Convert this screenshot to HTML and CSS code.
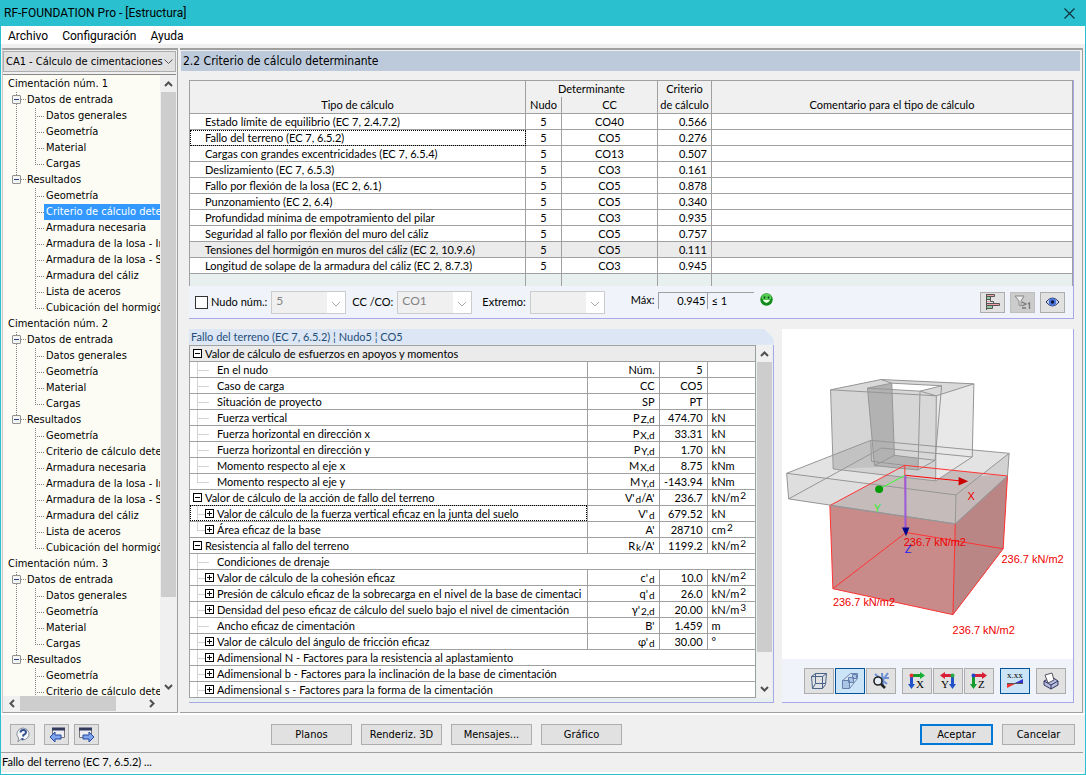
FILE: index.html
```html
<!DOCTYPE html>
<html lang="es">
<head>
<meta charset="utf-8">
<title>RF-FOUNDATION Pro - [Estructura]</title>
<link rel="stylesheet" href="styles.css">
</head>
<body>
<div class="window">
  <header class="titlebar">
    <h1>RF-FOUNDATION Pro - [Estructura]</h1>
    <button class="close" type="button" aria-label="Cerrar"><svg width="11" height="11" viewBox="0 0 11 11"><path d="M.5.5l10 10M10.5.5l-10 10" stroke="#10303a" stroke-width="1.2" fill="none"/></svg></button>
  </header>
  <nav class="menu">
    <a href="#archivo">Archivo</a><a href="#configuracion">Configuración</a><a href="#ayuda">Ayuda</a>
  </nav>

  <div class="workspace">
    <aside class="sidebar">
      <select class="case-select" aria-label="Caso de cálculo"><option>CA1 - Cálculo de cimentaciones</option></select>
      <div class="tree-frame">
        <div class="tree-view">
          <ul class="tree">
            <li><a href="#c1">Cimentación núm. 1</a>
              <ul class="groups">
                <li><button class="fold" type="button" aria-label="Contraer"></button><a href="#c1e">Datos de entrada</a>
                  <ul class="leaves"><li><a href="#a1">Datos generales</a></li><li><a href="#a2">Geometría</a></li><li><a href="#a3">Material</a></li><li><a href="#a4">Cargas</a></li></ul>
                </li>
                <li><button class="fold" type="button" aria-label="Contraer"></button><a href="#c1r">Resultados</a>
                  <ul class="leaves"><li><a href="#b1">Geometría</a></li><li><a class="current" href="#b2">Criterio de cálculo determinante</a></li><li><a href="#b3">Armadura necesaria</a></li><li><a href="#b4">Armadura de la losa - Inferior</a></li><li><a href="#b5">Armadura de la losa - Superior</a></li><li><a href="#b6">Armadura del cáliz</a></li><li><a href="#b7">Lista de aceros</a></li><li><a href="#b8">Cubicación del hormigón</a></li></ul>
                </li>
              </ul>
            </li>
            <li><a href="#c2">Cimentación núm. 2</a>
              <ul class="groups">
                <li><button class="fold" type="button" aria-label="Contraer"></button><a href="#c2e">Datos de entrada</a>
                  <ul class="leaves"><li><a href="#d1">Datos generales</a></li><li><a href="#d2">Geometría</a></li><li><a href="#d3">Material</a></li><li><a href="#d4">Cargas</a></li></ul>
                </li>
                <li><button class="fold" type="button" aria-label="Contraer"></button><a href="#c2r">Resultados</a>
                  <ul class="leaves"><li><a href="#e1">Geometría</a></li><li><a href="#e2">Criterio de cálculo determinante</a></li><li><a href="#e3">Armadura necesaria</a></li><li><a href="#e4">Armadura de la losa - Inferior</a></li><li><a href="#e5">Armadura de la losa - Superior</a></li><li><a href="#e6">Armadura del cáliz</a></li><li><a href="#e7">Lista de aceros</a></li><li><a href="#e8">Cubicación del hormigón</a></li></ul>
                </li>
              </ul>
            </li>
            <li><a href="#c3">Cimentación núm. 3</a>
              <ul class="groups">
                <li><button class="fold" type="button" aria-label="Contraer"></button><a href="#c3e">Datos de entrada</a>
                  <ul class="leaves"><li><a href="#f1">Datos generales</a></li><li><a href="#f2">Geometría</a></li><li><a href="#f3">Material</a></li><li><a href="#f4">Cargas</a></li></ul>
                </li>
                <li><button class="fold" type="button" aria-label="Contraer"></button><a href="#c3r">Resultados</a>
                  <ul class="leaves"><li><a href="#g1">Geometría</a></li><li><a href="#g2">Criterio de cálculo determinante</a></li><li><a href="#g3">Armadura necesaria</a></li></ul>
                </li>
              </ul>
            </li>
          </ul>
        </div>
        <div class="vscroll tree-v">
          <svg class="arrow" viewBox="0 0 15 17"><path d="M4 11l3.500-3.500L11 11" class="chev"/></svg>
          <div class="track"><div class="thumb" style="height:86%"></div></div>
          <svg class="arrow" viewBox="0 0 15 17"><path d="M4 6l3.500 3.500L11 6" class="chev"/></svg>
        </div>
        <div class="hscroll">
          <svg class="arrow" viewBox="0 0 17 15"><path d="M11 4L7.500 7.500 11 11" class="chev"/></svg>
          <div class="track"><div class="thumb" style="width:78%"></div></div>
          <svg class="arrow" viewBox="0 0 17 15"><path d="M7 4l3.500 3.500L7 11" class="chev"/></svg>
        </div>
      </div>
    </aside>

    <main class="content">
      <h2 class="section-title">2.2 Criterio de cálculo determinante</h2>
      <section class="panel">
        <table class="grid checks">
          <colgroup><col class="c-type"><col class="c-node"><col class="c-cc"><col class="c-crit"><col></colgroup>
          <thead>
            <tr><th rowspan="2" class="low">Tipo de cálculo</th><th colspan="2">Determinante</th><th class="nob">Criterio</th><th rowspan="2" class="low">Comentario para el tipo de cálculo</th></tr>
            <tr><th>Nudo</th><th>CC</th><th class="nob">de cálculo</th></tr>
          </thead>
          <tbody>
            <tr><td>Estado límite de equilibrio (EC 7, 2.4.7.2)</td><td>5</td><td>CO40</td><td>0.566</td><td></td></tr>
            <tr class="focus"><td>Fallo del terreno (EC 7, 6.5.2)</td><td>5</td><td>CO5</td><td>0.276</td><td></td></tr>
            <tr><td>Cargas con grandes excentricidades (EC 7, 6.5.4)</td><td>5</td><td>CO13</td><td>0.507</td><td></td></tr>
            <tr><td>Deslizamiento (EC 7, 6.5.3)</td><td>5</td><td>CO3</td><td>0.161</td><td></td></tr>
            <tr><td>Fallo por flexión de la losa (EC 2, 6.1)</td><td>5</td><td>CO5</td><td>0.878</td><td></td></tr>
            <tr><td>Punzonamiento (EC 2, 6.4)</td><td>5</td><td>CO5</td><td>0.340</td><td></td></tr>
            <tr><td>Profundidad mínima de empotramiento del pilar</td><td>5</td><td>CO3</td><td>0.935</td><td></td></tr>
            <tr><td>Seguridad al fallo por flexión del muro del cáliz</td><td>5</td><td>CO5</td><td>0.757</td><td></td></tr>
            <tr class="shaded"><td>Tensiones del hormigón en muros del cáliz (EC 2, 10.9.6)</td><td>5</td><td>CO5</td><td>0.111</td><td></td></tr>
            <tr><td>Longitud de solape de la armadura del cáliz (EC 2, 8.7.3)</td><td>5</td><td>CO3</td><td>0.945</td><td></td></tr>
            <tr class="rest"><td></td><td></td><td></td><td></td><td></td></tr>
          </tbody>
        </table>
        <div class="filter">
          <label class="check"><input type="checkbox">Nudo núm.:</label>
          <select class="combo" disabled aria-label="Nudo núm."><option>5</option></select>
          <label for="cc">CC /CO:</label>
          <select class="combo" id="cc" disabled><option>CO1</option></select>
          <label class="extreme" for="ext">Extremo:</label>
          <select class="combo" id="ext" disabled><option></option></select>
          <span class="max">Máx:</span>
          <div class="result"><output>0.945</output><span>≤ 1</span></div>
          <svg class="smile" width="13" height="13" viewBox="0 0 13 13"><circle cx="6.500" cy="6.500" r="6.200" fill="#128a1c"/><ellipse cx="6.500" cy="4.200" rx="5" ry="3.600" fill="#58cc52"/><path d="M4.500 3.500v2M8.500 3.500v2" stroke="#042" stroke-width="1.500"/><path d="M2.800 7q3.700 5.800 7.400 0z" fill="#eaffea"/></svg>
          <div class="filter-tools">
            <button class="tool" type="button" aria-label="Diagrama"><svg width="16" height="16" viewBox="0 0 16 16"><path d="M1.500 0v16" stroke="#555"/><path d="M1.500.5h8v2h-8M1.500 5.500h4v-3M1.500 9.500h13v2h-13M5.500 5.500v2h3v2M1.500 14.500h6v-3" fill="none" stroke="#555"/><path d="M2 1.500h7M2 10.500h12M2 7.500h3" stroke="#f2a0a8"/><path d="M2 4h3M2 13h5" stroke="#72c288" stroke-width="1.500"/></svg></button>
            <button class="tool off" type="button" aria-label="Filtro mayor que 1"><svg width="18" height="16" viewBox="0 0 18 16"><path d="M1 2h9L7 7v5L5 11V7z" fill="#eee" stroke="#888"/><path d="M8 8l4 2-4 2M8 14h4M14 10l1.500-1v6" fill="none" stroke="#777" stroke-width="1.300"/></svg></button>
            <button class="tool" type="button" aria-label="Ver"><svg width="15" height="12" viewBox="0 0 15 12"><path d="M1 6q6.500-8 13 0q-6.500 8-13 0z" fill="#dfe9ff" stroke="#222b55"/><circle cx="7.500" cy="6" r="3.800" fill="#4a74dc"/><circle cx="7.500" cy="6" r="1.700" fill="#10153a"/></svg></button>
          </div>
        </div>
      </section>

      <div class="lower">
        <section class="panel detail">
          <h3>Fallo del terreno (EC 7, 6.5.2) ¦ Nudo5 ¦ CO5</h3>
          <div class="detail-body">
            <table class="grid values">
              <colgroup><col><col class="v-sym"><col class="v-num"><col class="v-unit"></colgroup>
              <tbody>
                <tr class="shaded"><th colspan="4"><button class="box" type="button" aria-label="Contraer"></button>Valor de cálculo de esfuerzos en apoyos y momentos</th></tr>
                <tr><td class="br">En el nudo</td><td>Núm.</td><td>5</td><td></td></tr>
                <tr><td class="br">Caso de carga</td><td>CC</td><td>CO5</td><td></td></tr>
                <tr><td class="br">Situación de proyecto</td><td>SP</td><td>PT</td><td></td></tr>
                <tr><td class="br">Fuerza vertical</td><td>P<sub>Z,d</sub></td><td>474.70</td><td>kN</td></tr>
                <tr><td class="br">Fuerza horizontal en dirección x</td><td>P<sub>X,d</sub></td><td>33.31</td><td>kN</td></tr>
                <tr><td class="br">Fuerza horizontal en dirección y</td><td>P<sub>Y,d</sub></td><td>1.70</td><td>kN</td></tr>
                <tr><td class="br">Momento respecto al eje x</td><td>M<sub>X,d</sub></td><td>8.75</td><td>kNm</td></tr>
                <tr><td class="br last">Momento respecto al eje y</td><td>M<sub>Y,d</sub></td><td>-143.94</td><td>kNm</td></tr>
                <tr><th><button class="box" type="button" aria-label="Contraer"></button>Valor de cálculo de la acción de fallo del terreno</th><td>V'<sub>d</sub>/A'</td><td>236.7</td><td>kN/m<sup>2</sup></td></tr>
                <tr class="focus"><td class="br sub"><button class="box plus" type="button" aria-label="Expandir"></button>Valor de cálculo de la fuerza vertical eficaz en la junta del suelo</td><td>V'<sub>d</sub></td><td>679.52</td><td>kN</td></tr>
                <tr><td class="br sub last"><button class="box plus" type="button" aria-label="Expandir"></button>Área eficaz de la base</td><td>A'</td><td>28710</td><td>cm<sup>2</sup></td></tr>
                <tr><th><button class="box" type="button" aria-label="Contraer"></button>Resistencia al fallo del terreno</th><td>R<sub>k</sub>/A'</td><td>1199.2</td><td>kN/m<sup>2</sup></td></tr>
                <tr><td class="br" colspan="4">Condiciones de drenaje</td></tr>
                <tr><td class="br sub"><button class="box plus" type="button" aria-label="Expandir"></button>Valor de cálculo de la cohesión eficaz</td><td>c'<sub>d</sub></td><td>10.0</td><td>kN/m<sup>2</sup></td></tr>
                <tr><td class="br sub"><button class="box plus" type="button" aria-label="Expandir"></button>Presión de cálculo eficaz de la sobrecarga en el nivel de la base de cimentaci</td><td>q'<sub>d</sub></td><td>26.0</td><td>kN/m<sup>2</sup></td></tr>
                <tr><td class="br sub"><button class="box plus" type="button" aria-label="Expandir"></button>Densidad del peso eficaz de cálculo del suelo bajo el nivel de cimentación</td><td>γ'<sub>2,d</sub></td><td>20.00</td><td>kN/m<sup>3</sup></td></tr>
                <tr><td class="br">Ancho eficaz de cimentación</td><td>B'</td><td>1.459</td><td>m</td></tr>
                <tr><td class="br sub"><button class="box plus" type="button" aria-label="Expandir"></button>Valor de cálculo del ángulo de fricción eficaz</td><td>φ'<sub>d</sub></td><td>30.00</td><td>°</td></tr>
                <tr><td class="br sub" colspan="4"><button class="box plus" type="button" aria-label="Expandir"></button>Adimensional N - Factores para la resistencia al aplastamiento</td></tr>
                <tr><td class="br sub" colspan="4"><button class="box plus" type="button" aria-label="Expandir"></button>Adimensional b - Factores para la inclinación de la base de cimentación</td></tr>
                <tr><td class="br sub" colspan="4"><button class="box plus" type="button" aria-label="Expandir"></button>Adimensional s - Factores para la forma de la cimentación</td></tr>
              </tbody>
            </table>
            <div class="vscroll">
              <svg class="arrow" viewBox="0 0 15 17"><path d="M4 11l3.500-3.500L11 11" class="chev"/></svg>
              <div class="track"><div class="thumb" style="height:91%"></div></div>
              <svg class="arrow" viewBox="0 0 15 17"><path d="M4 6l3.500 3.500L11 6" class="chev"/></svg>
            </div>
          </div>
        </section>

        <section class="panel viewer">
          <svg class="scene" viewBox="781 329 292 330" role="img" aria-label="Cimentación">
            <g transform="translate(780 360) scale(.33333)" stroke-width="3" stroke-linejoin="round" fill="none">
              <path d="M147 436L372 315 681 347 668 566 517 764 156 686z" fill="#c98a8a"/>
              <path d="M524 491L681 347 668 566 517 764z" fill="#b98585"/>
              <path d="M17 339L270 240 686 279 681 347 524 491 23 416z" fill="#e3e3e3"/>
              <path d="M17 339L526 404 524 491 23 416z" fill="#dedede"/>
              <path d="M147 436L372 315 681 347 524 491z" fill="#c6bbbb"/>
              <path d="M526 404L686 279 681 347 524 491z" fill="#c4b8b8"/>
              <path d="M597 349L686 279 681 347 640 343z" fill="#d2d2d2"/>
              <path d="M149 88L301 57 580 70 575 290 465 362 157 326z" fill="#d2d2d2" fill-opacity=".93"/>
              <path d="M467 106L580 70 575 290 465 362z" fill="#e8e8e8"/>
              <path d="M149 88L301 57 580 70 467 106z" fill="#d9d9d9"/>
              <path d="M333 68L483 76 418 92 335 88z" fill="#fff"/>
              <path d="M260 83L333 68 341 285 281 316z" fill="#b2b2b2"/>
              <path d="M341 95L415 98 412 300 341 285z" fill="#d6d6d6"/>
              <path d="M157 285L270 240 277 270 281 316 302 320 157 326z" fill="#c2c2c2"/>
              <path d="M281 316L341 285 463 300 412 329z" fill="#b4b4b4"/>
              <path d="M418 92L467 106 463 300 412 329z" fill="#d8d8d8"/>
              <g stroke="#969696">
                <path d="M149 88L301 57 580 70 467 106zM157 326L465 362 575 290M149 88L157 326M467 106L465 362M580 70L575 290"/>
                <path d="M260 83L333 68 483 76 418 92zM281 316L341 285 463 300 412 329zM260 83L281 316M333 68L341 285M483 76L463 300M418 92L412 329M301 57L333 68M418 92L467 106"/>
                <path d="M17 339L270 240 686 279 526 404zM17 339L23 416 524 491 681 347 686 279M526 404L524 491M270 240L272 303M23 416L302 263 575 290M272 303L372 315"/>
              </g>
              <g stroke="#f33">
                <path d="M147 436L156 686 517 764 668 566 681 347 372 315 147 436M524 491L517 764M156 686L376 517 668 566M372 315L376 517"/>
              </g>
              <path d="M147 436L524 491 681 347" stroke="#969696"/>
              <path d="M373 345L540 362" stroke="#f00"/><path d="M534 350L563 363 534 376z" fill="#c00"/>
              <path d="M373 345L300 384" stroke="#3f3"/><ellipse cx="295" cy="387" rx="12" ry="11" fill="#090"/>
              <path d="M374 345V505" stroke="#9a5cdc" stroke-width="6"/><path d="M364 502H386L376 528z" fill="#008"/>
            </g>
            <g class="labels">
              <text x="967" y="500">X</text><text x="873" y="512" class="y">Y</text><text x="904" y="553" class="z">Z</text>
              <text x="903" y="546">236.7 kN/m2</text><text x="1001" y="563">236.7 kN/m2</text><text x="832" y="606">236.7 kN/m2</text><text x="952" y="634">236.7 kN/m2</text>
            </g>
          </svg>
          <div class="view-tools">
            <div class="set">
              <button class="tool wide" type="button" aria-label="Alambre"><svg width="18" height="18" viewBox="0 0 18 18"><path d="M1.500 4.500h11v12h-10zM1.500 4.500l4-3h11l-4 3M16.500 1.500l-1 11-3 4M5.500 1.500v10h10M5.500 11.500l-3 5" fill="#dde4ee" fill-opacity=".5" stroke="#4c6388"/></svg></button>
              <button class="tool wide on" type="button" aria-label="Perspectiva"><svg width="18" height="18" viewBox="0 0 18 18"><path d="M1.500 8.500l8-7h7v5l-8 10" fill="#d3e3f4" stroke="#6d88b0"/><path d="M11.500 2.500h4v4h-4zM7.500 5.500h5v5h-5zM1.500 8.500h7v8h-7z" fill="#a9c4e4" stroke="#6580aa"/></svg></button>
              <button class="tool wide" type="button" aria-label="Zoom total"><svg width="18" height="18" viewBox="0 0 18 18"><path d="M3 2l12 10M16 1L8 12M10 1l1 12M17 6H5" stroke="#6c8fd4" stroke-width="2"/><circle cx="6" cy="9" r="4" fill="#e8eef8" stroke="#222" stroke-width="1.600"/><path d="M9 12l4 4" stroke="#222" stroke-width="2.500"/></svg></button>
            </div>
            <div class="set">
              <button class="tool wide" type="button" aria-label="Vista X"><svg width="18" height="18" viewBox="0 0 18 18"><path d="M3 3.500h10" stroke="#149c2c" stroke-width="3"/><path d="M12 0l5 3.500-5 3.500z" fill="#19b035"/><path d="M3.500 4v9" stroke="#2352c8" stroke-width="3"/><path d="M0 12h7l-3.500 5z" fill="#2352c8"/><circle cx="3.500" cy="3.500" r="2" fill="#e33"/><text x="8" y="16" class="ax">X</text></svg></button>
              <button class="tool wide" type="button" aria-label="Vista Y"><svg width="18" height="18" viewBox="0 0 18 18"><path d="M4 3.500h10" stroke="#d81f36" stroke-width="3"/><path d="M6 0L1 3.500 6 7z" fill="#d81f36"/><path d="M13.500 4v9" stroke="#2352c8" stroke-width="3"/><path d="M10 12h7l-3.500 5z" fill="#2352c8"/><circle cx="13.500" cy="3.500" r="2" fill="#2a4"/><text x="2" y="16" class="ax">Y</text></svg></button>
              <button class="tool wide" type="button" aria-label="Vista Z"><svg width="18" height="18" viewBox="0 0 18 18"><path d="M3 3.500h10" stroke="#d81f36" stroke-width="3"/><path d="M12 0l5 3.500-5 3.500z" fill="#d81f36"/><path d="M3.500 4v9" stroke="#149c2c" stroke-width="3"/><path d="M0 12h7l-3.500 5z" fill="#149c2c"/><circle cx="3.500" cy="3.500" r="2" fill="#24c"/><text x="8" y="16" class="ax">Z</text></svg></button>
            </div>
            <button class="tool wide on" type="button" aria-label="Valores"><svg width="18" height="18" viewBox="0 0 18 18"><text x="1" y="6" class="xx">x.xx</text><path d="M1 11.500h16" stroke="#555"/><path d="M1 12v4l8-4z" fill="#e33"/><path d="M17 11V7l-8 4z" fill="#33c"/></svg></button>
            <button class="tool wide" type="button" aria-label="Imprimir"><svg width="18" height="18" viewBox="0 0 18 18"><path d="M2 9l8-4 6 4v4l-7 4-7-4z" fill="#b8bce0" stroke="#33365c"/><path d="M3 3l7-2 2 7-6 3z" fill="#fff" stroke="#556"/><path d="M2 9l7 4 7-4M9 13v4" fill="none" stroke="#33365c"/></svg></button>
          </div>
        </section>
      </div>
    </main>
  </div>

  <footer class="actions">
    <div class="icons">
      <button class="tool" type="button" aria-label="Ayuda"><svg width="16" height="16" viewBox="0 0 16 16"><path d="M8 1a6.500 6 0 1 1-3 11.500L3 15l.5-4A6.500 6 0 0 1 8 1z" fill="#f5f7fb" stroke="#888e9c"/><path d="M5.500 5.500q0-2.500 2.700-2.500T11 5.300Q11 6.800 8.500 8L8 9.500M7.500 11v2" fill="none" stroke="#31508f" stroke-width="2"/></svg></button>
      <div class="pair">
        <button class="tool" type="button" aria-label="Anterior"><svg width="16" height="16" viewBox="0 0 16 16"><path d="M3.500 1.500h12v9h-12z" fill="#ededf2" stroke="#777"/><path d="M3 2h13" stroke="#333b5e" stroke-width="3"/><path d="M1 10l5-5v3h6v4H6v3z" fill="#7fa4ee" stroke="#2848a0"/></svg></button>
        <button class="tool" type="button" aria-label="Siguiente"><svg width="16" height="16" viewBox="0 0 16 16"><path d="M.5 1.500h12v9H.5z" fill="#ededf2" stroke="#777"/><path d="M0 2h13" stroke="#333b5e" stroke-width="3"/><path d="M15 10l-5-5v3H4v4h6v3z" fill="#7fa4ee" stroke="#2848a0"/></svg></button>
      </div>
    </div>
    <div class="commands">
      <button class="btn" type="button">Planos</button><button class="btn" type="button">Renderiz. 3D</button><button class="btn" type="button">Mensajes...</button><button class="btn" type="button">Gráfico</button>
    </div>
    <div class="confirm">
      <button class="btn primary" type="button">Aceptar</button><button class="btn" type="button">Cancelar</button>
    </div>
  </footer>
  <div class="status">Fallo del terreno (EC 7, 6.5.2) ...</div>
</div>
</body>
</html>
```
FILE: styles.css
```css
:root {
  --ui: "DejaVu Sans Condensed", "DejaVu Sans", sans-serif;
  --bar: Roboto, "Liberation Sans", sans-serif;
  --grid: Lato, "Liberation Sans", Arial, sans-serif;
  --line: #a0a0a0;
  --lilac: #a8a8e8;
  --soft: #f0f4fa;
}
* { box-sizing: border-box; }
body { margin: 0; background: #f0f0f0; color: #000; font: 11px/16px var(--grid); }
h1, h2, h3, ul { margin: 0; padding: 0; font-size: 11px; font-weight: normal; }
ul { list-style: none; }
a { color: inherit; text-decoration: none; }
button, select, input { margin: 0; font: inherit; color: inherit; }
button { padding: 0; border-radius: 0; }

.window { display: flex; flex-direction: column; height: 100vh; min-height: 775px; border: 1px solid #2bc0cf; border-top: 0; }
.titlebar { display: flex; flex: none; align-items: center; justify-content: space-between; height: 26px; padding: 0 10px 0 3px; background: #2bc0cf; }
.titlebar h1 { font: 12px/24px var(--bar); }
.close { display: flex; border: 0; background: none; }
.menu { display: flex; flex: none; gap: 14px; height: 18px; padding-left: 7px; background: #fff; font: 12px/20px var(--bar); }

.workspace { display: flex; flex: 1; gap: 2px; min-height: 0; padding: 4px 2px 0 1px; border-bottom: 2px solid #fff; }
.sidebar { display: flex; flex: none; flex-direction: column; gap: 2px; width: 176px; padding: 1px 1px 1px 0; border: 1px solid var(--line); border-top-width: 2px; border-left-color: #ccc; }
.case-select { flex: none; height: 21px; padding: 0 12px 0 2px; border: 1px solid #adadad; border-radius: 0; appearance: none; font: 11px/18px var(--ui);
  background: #e1e1e1 url("data:image/svg+xml,%3Csvg xmlns='http://www.w3.org/2000/svg' width='9' height='6'%3E%3Cpath d='M.5.5l4 4 4-4' fill='none' stroke='%23555'/%3E%3C/svg%3E") right 2px center no-repeat; }
.tree-frame { display: grid; flex: 1; grid-template: minmax(0, 1fr) 15px / minmax(0, 1fr) 16px; min-height: 0; border-top: 1px solid #888; background: #f0f0f0; }
.tree-view { padding-top: 1px; overflow: hidden; background: #fdfcf4; font-family: var(--ui); white-space: nowrap; }
.tree > li > a { padding-left: 5px; }
.groups > li { padding-left: 9px;
  background: repeating-linear-gradient(#808080 0 1px, transparent 1px 2px) 13px 0 / 1px 100% no-repeat; }
.groups > li:last-child { background-size: 1px 8px; }
.groups > li > a { padding-left: 6px; background: repeating-linear-gradient(90deg, #808080 0 1px, transparent 1px 2px) 0 50% / 5px 1px no-repeat; }
.fold { width: 9px; height: 9px; border: 1px solid #919191; border-radius: 1px; vertical-align: middle; margin-top: -2px; background: linear-gradient(#27408b, #27408b) center / 5px 1px no-repeat, #f4f4f4; }
.leaves { margin-left: 23px; }
.leaves > li { padding-left: 9px;
  background: repeating-linear-gradient(#808080 0 1px, transparent 1px 2px) 0 0 / 1px 100% no-repeat, repeating-linear-gradient(90deg, #808080 0 1px, transparent 1px 2px) 0 8px / 9px 1px no-repeat; }
.leaves > li:last-child { background-size: 1px 8px, 9px 1px; }
.leaves a { display: block; padding-left: 2px; }
.current { background: #3399ff; color: #fff; }

.vscroll { display: flex; flex-direction: column; width: 15px; background: #f0f0f0; }
.tree-v { margin-left: 1px; }
.hscroll { display: flex; background: #f0f0f0; }
.track { flex: 1; }
.thumb { background: #cdcdcd; height: 100%; }
.vscroll .arrow { width: 15px; height: 17px; }
.hscroll .arrow { width: 17px; height: 15px; }
.chev { fill: none; stroke: #505050; stroke-width: 2; }

.content { display: flex; flex: 1; flex-direction: column; min-width: 0; padding: 1px 0 0; border: 1px solid var(--line); border-width: 2px 1px 1px 0; }
.section-title { flex: none; height: 20px; margin: 0 2px 9px 1px; padding-left: 2px; background: #bccadb; font: 12px/20px var(--ui); }
.panel { margin: 0 8px 0 9px; border: solid var(--lilac); border-width: 0 1px 1px 0; background: var(--soft); }

.grid { width: 100%; border-collapse: collapse; table-layout: fixed; background: #fff; }
.grid th, .grid td { height: 16px; padding: 0; border: 1px solid var(--line); overflow: hidden; font-weight: normal; line-height: 15px; white-space: nowrap; }
.checks th { background: #f0f0f0; border-bottom: 0; text-align: center; }
.checks tr + tr th { border-top: 0; }
.checks .nob { border-bottom: 0; }
.checks th.low { vertical-align: bottom; line-height: 17px; }
.checks thead th { height: 16px; }
.checks thead tr + tr th { height: 17px; }
.c-type { width: 336px; } .c-node { width: 36px; } .c-cc { width: 96px; } .c-crit { width: 54px; }
.checks td { text-align: center; }
.checks td:first-child { padding-left: 15px; text-align: left; }
.checks td:nth-child(4) { padding-right: 4px; text-align: right; }
.shaded { background: #ebebeb; }
.grid .rest td { height: 12px; border-bottom: 0; background: #e8efef; }
.focus td:first-child { outline: 1px dotted #000; outline-offset: -1px; }

.filter { display: flex; align-items: center; gap: 4px; height: 32px; padding: 1px 8px 0 6px; }
.check { display: flex; align-items: center; gap: 3px; }
.check input { width: 13px; height: 13px; border: 1px solid #333; background: #fff; appearance: none; }
.combo { width: 75px; height: 23px; margin-right: 2px; padding: 0 0 2px 4px; border: 1px solid #ccc; border-radius: 0; appearance: none; color: #838383; opacity: 1; font-size: 12px;
  background: url("data:image/svg+xml,%3Csvg xmlns='http://www.w3.org/2000/svg' width='18' height='21'%3E%3Cpath d='M0 0h18v21H0z' fill='%23fff'/%3E%3Cpath d='M5 10l4 4 4-4' fill='none' stroke='%23aaa'/%3E%3C/svg%3E") right 0 top 0 no-repeat, #f0f0f0; }
.extreme { margin-left: 4px; }
.max { margin: 0 0 4px 20px; }
.result { display: flex; width: 96px; height: 17px; margin: 0 2px 4px 0; border: solid var(--line); border-width: 1px 0 0 1px; }
.result output { width: 49px; padding-right: 2px; border-right: 1px solid var(--line); text-align: right; }
.result span { padding-left: 3px; }
.smile { margin-bottom: 6px; }
.filter-tools { display: flex; gap: 5px; margin-left: auto; }
.tool { display: flex; align-items: center; justify-content: center; width: 25px; height: 21px; border: 1px solid #adadad; background: #e1e1e1; }
.tool.off { border-color: #bfbfbf; background: #ccc; }
.tool.wide { width: 30px; height: 26px; }
.tool.on { border-color: #005499; background: #cce4f7; }

.lower { display: grid; flex: 1; grid-template-columns: minmax(0, 2fr) minmax(0, 1fr); gap: 8px; min-height: 0; margin: 10px 8px 9px 9px; }
.lower .panel { display: flex; flex-direction: column; min-height: 0; margin: 0; }
.lower .detail { border-right: 0; background: #e8efef; }
.detail h3 { flex: none; height: 16px; padding-left: 2px; background: #dce6f4; color: #1f4e79; clip-path: polygon(0 0, calc(100% - 10px) 0, 100% 10px, 100% 100%, 0 100%); }
.detail { box-shadow: inset 0 10px #f0f0f0; }
.detail-body { display: flex; align-items: flex-start; gap: 1px; border-right: 1px solid var(--lilac); flex: 1; }
.detail-body .grid { flex: 1; }
.detail-body .vscroll { align-self: stretch; margin: 0 1px 4px 0; }
.v-sym { width: 72px; } .v-num, .v-unit { width: 48px; }
.values th { padding-left: 3px; text-align: left; }
.values td:nth-child(2), .values td:nth-child(3) { padding-right: 4px; text-align: right; }
.values td:nth-child(4) { padding-left: 4px; }
.values td.br { padding-left: 27px; background: linear-gradient(#d4d4d4, #d4d4d4) 7px 0 / 1px 100% no-repeat, linear-gradient(#d4d4d4, #d4d4d4) 7px 8px / 12px 1px no-repeat; }
.values td.br.last { background-size: 1px 8px, 12px 1px; }
.values td.br.sub { padding-left: 15px; }
.values sub, .values sup { padding-left: 1px; font-size: 10px; line-height: 0; }
.values sub { vertical-align: -1px; }
.values sup { vertical-align: 3px; }
.box { width: 9px; height: 9px; margin: -2px 3px 0 0; border: 1px solid #000; vertical-align: middle; background: linear-gradient(#000, #000) center / 5px 1px no-repeat, #fff; }
.box.plus { background: linear-gradient(#000, #000) center / 5px 1px no-repeat, linear-gradient(#000, #000) center / 1px 5px no-repeat, #fff; }

.scene { flex: 1; width: 100%; min-height: 0; background: #fff; }
.labels { fill: #e00; font: 11px "Liberation Sans", Arial, sans-serif; }
.labels .y { fill: #3e3; } .labels .z { fill: #22e; }
.view-tools { display: flex; flex: none; justify-content: flex-end; align-items: center; gap: 6px; height: 43px; padding-right: 7px; }
.set { display: flex; gap: 1px; }
.ax { font: 11px "Liberation Serif", serif; }
.xx { font: 9px "Liberation Serif", serif; }

.actions { display: flex; flex: none; align-items: center; height: 37px; padding: 2px 10px 0 9px; font: 11px/16px var(--ui); }
.icons { display: flex; gap: 9px; width: 261px; }
.pair { display: flex; gap: 5px; }
.commands, .confirm { display: flex; gap: 9px; }
.confirm { margin-left: auto; }
.btn { width: 81px; height: 21px; border: 1px solid #adadad; background: #e1e1e1; }
.confirm .btn { width: 73px; }
.btn.primary { border: 2px solid #0078d7; }
.status { flex: none; height: 22px; margin-right: 2px; padding: 1px 1px; border-top: 1px solid var(--line); border-bottom: 2px solid #fff; }
```
